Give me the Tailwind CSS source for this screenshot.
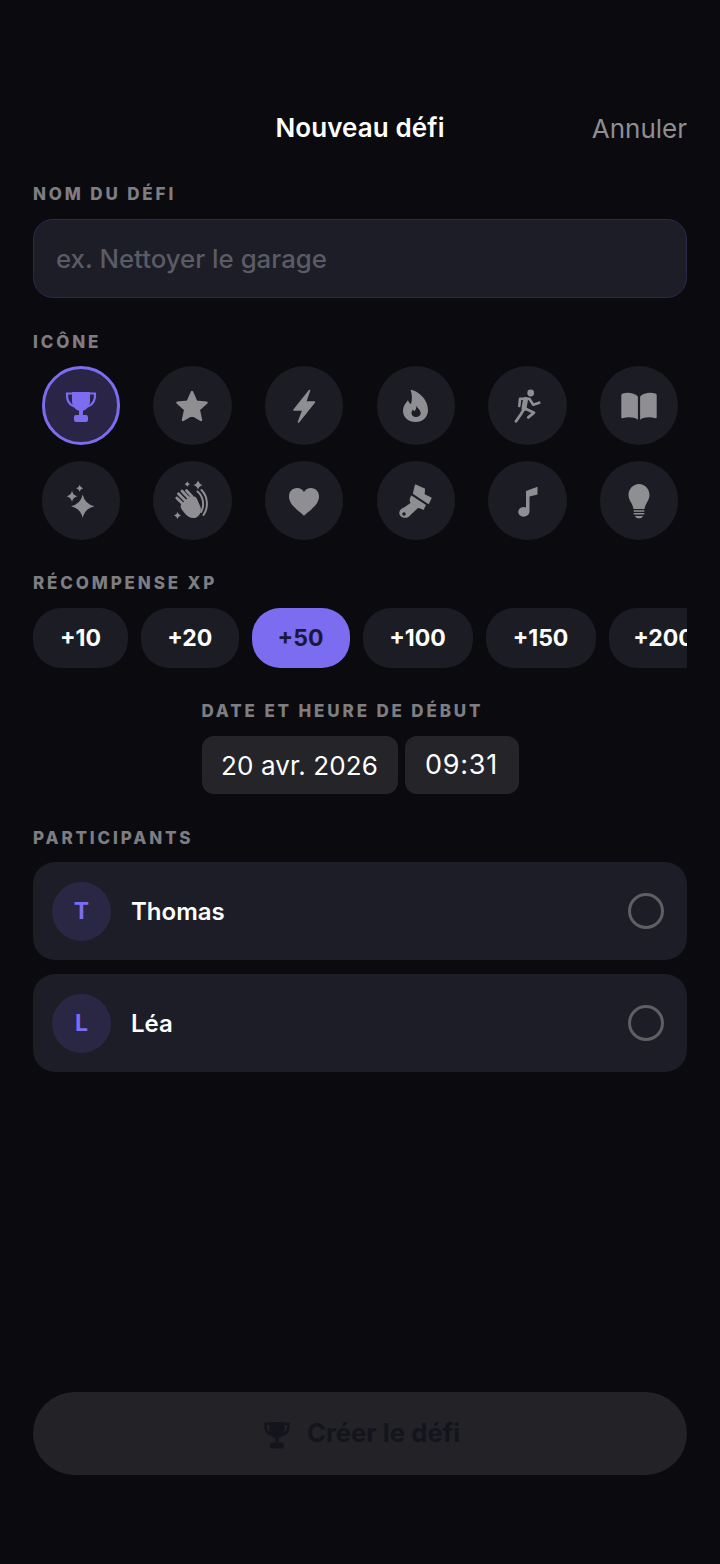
<!DOCTYPE html>
<html lang="fr">
  <head>
    <meta charset="UTF-8" />
    <meta name="viewport" content="width=device-width, initial-scale=1.0" />
    <title>Nouveau défi</title>
    <script src="https://cdn.jsdelivr.net/npm/@tailwindcss/browser@4"></script>
  </head>

  <body class="bg-[#0a0a0f] text-white font-['Inter',sans-serif]">
    <div class="h-[1564px] flex flex-col px-[33px] pt-[110px] pb-[89px] overflow-hidden">

      <!-- header -->
      <header class="relative h-9 flex items-center justify-center">
        <h1 class="text-[26px] leading-9 font-semibold tracking-[0.1px]">Nouveau défi</h1>
        <button class="absolute right-0 top-px text-[26px] leading-9 text-[#8e8e93]">Annuler</button>
      </header>

      <!-- nom -->
      <label class="mt-[38px] text-[17px] leading-[21px] font-extrabold tracking-[2.85px] text-[#7d7d82]">NOM DU DÉFI</label>
      <input
        type="text"
        placeholder="ex. Nettoyer le garage"
        class="mt-[14px] h-[79px] w-full shrink-0 rounded-[20px] border border-[#2c2a4c] bg-[#1c1d26] px-[22px] text-[25.8px] font-medium outline-none placeholder:text-[#5b5b65]"
      />

      <!-- icone -->
      <p class="mt-[34px] text-[17px] leading-[21px] font-extrabold tracking-[2.85px] text-[#7d7d82]">ICÔNE</p>
      <div class="mt-[13px] px-[8.5px] flex flex-col gap-4 text-[#8e8e93]">
        <div class="flex justify-between">
          <button class="w-[78.5px] h-[79px] rounded-full border-[3px] border-[#7c6cf0] bg-[#2a2547] flex items-center justify-center text-[#7c6cf0]">
            <svg class="w-10 h-10" viewBox="0 0 40 40" fill="currentColor"><path d="M11 6H29V15C29 20.5 25 24 22 24.8V30H18V24.8C15 24 11 20.5 11 15Z"/><path d="M11 7.5H6C5.5 14 8 18.5 13 20.5M29 7.5H34C34.5 14 32 18.5 27 20.5" fill="none" stroke="currentColor" stroke-width="2.2"/><rect x="13" y="29" width="14" height="7" rx="2"/></svg>
          </button>
          <button class="w-[78.5px] h-[79px] rounded-full bg-[#1c1d24] flex items-center justify-center">
            <svg class="w-10 h-10" viewBox="0 0 40 40" fill="currentColor" stroke="currentColor" stroke-width="2.4" stroke-linejoin="round"><path d="M20 6L24.2 15.6 34.6 16.7 26.8 23.7 29 34 20 28.7 11 34 13.2 23.7 5.4 16.7 15.8 15.6Z"/></svg>
          </button>
          <button class="w-[78.5px] h-[79px] rounded-full bg-[#1c1d24] flex items-center justify-center">
            <svg class="w-10 h-10" viewBox="0 0 40 40" fill="currentColor" stroke="currentColor" stroke-width="1.6" stroke-linejoin="round"><path d="M25.5 4.5L10 24H19L14.5 36 30.5 16H21.5Z"/></svg>
          </button>
          <button class="w-[78.5px] h-[79px] rounded-full bg-[#1c1d24] flex items-center justify-center">
            <svg class="w-10 h-10" viewBox="0 0 40 40" fill="currentColor" fill-rule="evenodd"><path d="M14.5 3.8C22 5 32 13 32 24 32 31.5 26.5 36 19.5 36 12.5 36 7 31.5 7 25 7 20 10 17 12 14 12.5 16 13.5 17.5 15 18 16.5 13 16 8 14.5 3.8ZM20.5 19.5C21 22 24.7 24 24.7 27 24.7 29.5 22.5 31 20 31 17.5 31 15.5 29.5 15.5 27 15.5 25.5 16.3 24.3 17 23.5 17.5 24.5 18 25 18.8 25 19.8 23.5 20.6 21.5 20.5 19.5Z"/></svg>
          </button>
          <button class="w-[78.5px] h-[79px] rounded-full bg-[#1c1d24] flex items-center justify-center">
            <svg class="w-10 h-10" viewBox="0 0 40 40" fill="none" stroke="currentColor" stroke-linecap="round" stroke-linejoin="round"><circle cx="22.7" cy="7" r="3.4" fill="currentColor" stroke="none"/><path stroke-width="2.6" d="M11.3 20L12 12.7H21.3L25.3 18.7 31.3 16.7"/><path stroke-width="5" d="M17.5 13.5L16 22.5"/><path stroke-width="2.8" d="M15.3 24.3L12.7 28.5 8 35.3M17.5 22.7L26 26.7 20.3 31.3"/></svg>
          </button>
          <button class="w-[78.5px] h-[79px] rounded-full bg-[#1c1d24] flex items-center justify-center">
            <svg class="w-10 h-10" viewBox="0 0 40 40" fill="currentColor"><path d="M18.9 10.5V33.7C15 31 9 30.6 3.6 32.3 2.8 32.5 2.3 32 2.3 31.2V9.5C2.3 8.5 2.8 7.8 3.8 7.5 9 6 15.5 7 18.9 10.5Z"/><path d="M21.1 10.5V33.7C25 31 31 30.6 36.4 32.3 37.2 32.5 37.7 32 37.7 31.2V9.5C37.7 8.5 37.2 7.8 36.2 7.5 31 6 24.5 7 21.1 10.5Z"/></svg>
          </button>
        </div>
        <div class="flex justify-between">
          <button class="w-[78.5px] h-[79px] rounded-full bg-[#1c1d24] flex items-center justify-center">
            <svg class="w-10 h-10" viewBox="0 0 40 40" fill="currentColor"><path d="M21.7 13.6Q23.8 23.2 33.4 25.3 23.8 27.4 21.7 37 19.6 27.4 10 25.3 19.6 23.2 21.7 13.6Z"/><path d="M11 9.8Q12 14.3 16.5 15.3 12 16.3 11 20.8 10 16.3 5.5 15.3 10 14.3 11 9.8Z"/><path d="M18.7 3.8Q19.3 6.7 22.2 7.3 19.3 7.9 18.7 10.8 18.1 7.9 15.2 7.3 18.1 6.7 18.7 3.8Z"/></svg>
          </button>
          <button class="w-[78.5px] h-[79px] rounded-full bg-[#1c1d24] flex items-center justify-center">
            <svg class="w-10 h-10" viewBox="0 0 40 40" fill="currentColor" stroke-linecap="round"><path d="M15.3 0.6Q16 2.5 18 3.2 16 3.9 15.3 5.8 14.6 3.9 12.7 3.2 14.6 2.5 15.3 0.6Z"/><path d="M26 -0.5Q27 3 30.5 4 27 5 26 8.5 25 5 21.5 4 25 3 26 -0.5Z"/><path d="M5.5 31Q6.2 33.8 9 34.5 6.2 35.2 5.5 38 4.8 35.2 2 34.5 4.8 33.8 5.5 31Z"/><g fill="none" stroke="currentColor" stroke-width="2.8"><path d="M4.8 17L13 25M6.5 12.8L15 21.5M10 10L17 17.5M14.5 9.5L20 15.5"/><path d="M25.5 10.5C31 15 33 24 29 31" stroke-width="2"/><path d="M29.5 9C35.5 15 37 26 31.5 34" stroke-width="2"/></g><path d="M10.5 22L17.5 15.5C21 15 24 15 25 18L28.5 26C30 31 27 37 21 37 16 37 13.5 33 10.5 29.5 8 26 8 24 10.5 22Z"/></svg>
          </button>
          <button class="w-[78.5px] h-[79px] rounded-full bg-[#1c1d24] flex items-center justify-center">
            <svg class="w-10 h-10" viewBox="0 0 40 40" fill="currentColor"><path d="M20 34.7C15 30 5 24 5 15.5 5 10.5 8.5 7 13 7 16 7 18.5 8.5 20 11 21.5 8.5 24 7 27 7 31.5 7 35 10.5 35 15.5 35 24 25 30 20 34.7Z"/></svg>
          </button>
          <button class="w-[78.5px] h-[79px] rounded-full bg-[#1c1d24] flex items-center justify-center">
            <svg class="w-10 h-10" viewBox="0 0 40 40" fill="currentColor" fill-rule="evenodd" stroke-linejoin="round"><path d="M19.5 4L28.5 8 28 13.5 35 17 32.5 22.5 17.5 12.5Z" stroke="currentColor" stroke-width="1.2"/><path d="M15.5 14.5L30 24 27.5 29 24.5 27.5 22 27 14 34.5C11.5 38 5.5 37.5 3.5 33.5 2.5 30 5 27.5 8 26.5L14.5 22C13.5 20 13 18 15.5 14.5ZM8 31.2A1.8 1.8 0 1 0 8 34.8 1.8 1.8 0 1 0 8 31.2Z"/></svg>
          </button>
          <button class="w-[78.5px] h-[79px] rounded-full bg-[#1c1d24] flex items-center justify-center">
            <svg class="w-10 h-10" viewBox="0 0 40 40" fill="currentColor"><path d="M18 10L29.5 5.7V13.5L21.5 15.5V30.5C21.5 33.5 18.5 35.7 15.5 35.7 12.5 35.7 10.3 33.5 10.3 31 10.3 28 13 26 15.5 26 16.5 26 17.3 26.2 18 26.5Z"/></svg>
          </button>
          <button class="w-[78.5px] h-[79px] rounded-full bg-[#1c1d24] flex items-center justify-center">
            <svg class="w-10 h-10" viewBox="0 0 40 40" fill="currentColor"><path d="M20 3C26 3 30.5 8 30.5 14 30.5 19.5 26 23 25.5 28H14.5C14 23 9.5 19.5 9.5 14 9.5 8 14 3 20 3Z"/><rect x="14.5" y="29.3" width="11" height="1.4" rx="0.7"/><rect x="14.5" y="32" width="11" height="1.4" rx="0.7"/><path d="M16 35H24C23.5 36.6 22 37.3 20 37.3 18 37.3 16.5 36.6 16 35Z"/></svg>
          </button>
        </div>
      </div>

      <!-- recompense -->
      <p class="mt-[33px] text-[17px] leading-[21px] font-extrabold tracking-[2.85px] text-[#7d7d82]">RÉCOMPENSE XP</p>
      <div class="mt-[14px] flex gap-[13px] overflow-hidden shrink-0">
        <button class="shrink-0 h-[60px] w-[95px] rounded-[28px] bg-[#1c1d24] text-[23px] font-bold">+10</button>
        <button class="shrink-0 h-[60px] w-[97.5px] rounded-[28px] bg-[#1c1d24] text-[23px] font-bold">+20</button>
        <button class="shrink-0 h-[60px] w-[98px] rounded-[28px] bg-[#7c6cf0] text-[#1a1838] text-[23px] font-bold">+50</button>
        <button class="shrink-0 h-[60px] w-[110px] rounded-[28px] bg-[#1c1d24] text-[23px] font-bold">+100</button>
        <button class="shrink-0 h-[60px] w-[110px] rounded-[28px] bg-[#1c1d24] text-[23px] font-bold">+150</button>
        <button class="shrink-0 h-[60px] w-[110px] rounded-[28px] bg-[#1c1d24] text-[23px] font-bold">+200</button>
      </div>

      <!-- date -->
      <div class="mt-[33px] w-[317px] mx-auto">
        <p class="text-[17px] leading-[21px] font-extrabold tracking-[2.85px] text-[#7d7d82] whitespace-nowrap">DATE ET HEURE DE DÉBUT</p>
        <div class="mt-[14px] flex gap-[7px]">
          <span class="h-[58px] w-[196px] rounded-xl bg-[#242429] flex items-center justify-center text-[26px] tracking-[0.1px]">20 avr. 2026</span>
          <span class="h-[58px] w-[114px] rounded-xl bg-[#242429] flex items-center justify-center text-[27px] tracking-[0.8px]">09:31</span>
        </div>
      </div>

      <!-- participants -->
      <p class="mt-[34px] text-[17px] leading-[21px] font-extrabold tracking-[2.85px] text-[#7d7d82]">PARTICIPANTS</p>
      <div class="mt-[13px] flex flex-col gap-[14px]">
        <div class="h-[98px] rounded-[22px] bg-[#1c1d26] flex items-center pl-[19px] pr-[23px]">
          <div class="w-[59px] h-[59px] rounded-full bg-[#2a2745] flex items-center justify-center text-[23px] font-bold text-[#7c6cf0]">T</div>
          <span class="ml-5 mt-0.5 text-[24px] font-semibold">Thomas</span>
          <span class="ml-auto w-9 h-9 rounded-full border-[3px] border-[#5f5f63]"></span>
        </div>
        <div class="h-[98px] rounded-[22px] bg-[#1c1d26] flex items-center pl-[19px] pr-[23px]">
          <div class="w-[59px] h-[59px] rounded-full bg-[#2a2745] flex items-center justify-center text-[23px] font-bold text-[#7c6cf0]">L</div>
          <span class="ml-5 mt-0.5 text-[24px] font-semibold">Léa</span>
          <span class="ml-auto w-9 h-9 rounded-full border-[3px] border-[#5f5f63]"></span>
        </div>
      </div>

      <!-- creer -->
      <button class="mt-auto h-[83px] shrink-0 rounded-[42px] bg-[#222227] flex items-center justify-center gap-[13px] text-[25.7px] font-bold text-[#14141c]">
        <svg class="w-[34px] h-[34px]" viewBox="0 0 40 40" fill="currentColor"><path d="M11 6H29V15C29 20.5 25 24 22 24.8V30H18V24.8C15 24 11 20.5 11 15Z"/><path d="M11 8H6.5C6 14 8 19 13 21M29 8H33.5C34 14 32 19 27 21" fill="none" stroke="currentColor" stroke-width="3"/><rect x="12" y="30" width="16" height="7" rx="2"/></svg>
        Créer le défi
      </button>
    </div>
  </body>
</html>
